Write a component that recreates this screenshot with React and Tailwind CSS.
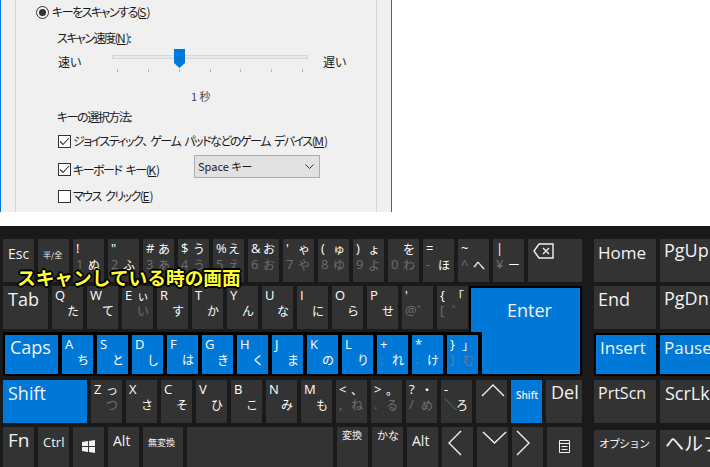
import React from "react";

const jp = "font-['Noto_Sans_CJK_JP','Noto_Sans',sans-serif]";

// [top left, top right, bottom left, bottom right] - a leading ~ means dim legend
const row1 = [
    ["!", "", "~1", "ぬ"], ['"', "", "~2", "ふ"], ["#", "あ", "~3", "~あ"], ["$", "う", "~4", "~う"],
    ["%", "え", "~5", "~え"], ["&", "お", "~6", "~お"], ["'", "ゃ", "~7", "~や"], ["(", "ゅ", "~8", "~ゆ"],
    [")", "ょ", "~9", "~よ"], ["", "を", "~0", "~わ"], ["=", "", "~-", "ほ"], ["~", "", "~^", "へ"], ["|", "", "~¥", "ー"],
];
const row2 = [
    ["Q", "", "", "た"], ["W", "", "", "て"], ["E", "ぃ", "", "~い"], ["R", "", "", "す"], ["T", "", "", "か"],
    ["Y", "", "", "ん"], ["U", "", "", "な"], ["I", "", "", "に"], ["O", "", "", "ら"], ["P", "", "", "せ"],
    ["'", "", "~@", "~゛"], ["{", "「", "~[", "~゜"],
];
const row3 = [
    ["A", "", "", "ち"], ["S", "", "", "と"], ["D", "", "", "し"], ["F", "", "", "は"], ["G", "", "", "き"],
    ["H", "", "", "く"], ["J", "", "", "ま"], ["K", "", "", "の"], ["L", "", "", "り"],
    ["+", "", "~;", "れ"], ["*", "", "~:", "け"], ["}", "」", "~]", "~む"],
];
const row4 = [
    ["Z", "っ", "", "~つ"], ["X", "", "", "さ"], ["C", "", "", "そ"], ["V", "", "", "ひ"], ["B", "", "", "こ"],
    ["N", "", "", "み"], ["M", "", "", "も"], ["<", "、", "~,", "~ね"], [">", "。", "~.", "~る"],
    ["?", "・", "~/", "~め"], ["-", "", "~＼", "ろ"],
];

const Legend = ({ text, blue, kana }) => {
    if (!text) return <span />;
    const dim = text[0] === "~" && text.length > 1;
    const color = dim ? (blue ? "text-[#5d7d9c]" : "text-[#6f6f6f]") : "text-white";
    return (
        <span className={`${color} ${kana ? `text-[12px] ${jp}` : "text-[13px]"} leading-none whitespace-nowrap self-center`}>
            {dim ? text.slice(1) : text}
        </span>
    );
};

const LetterKey = ({ item, blue, tall }) => (
    <div className={`w-[31px] h-full shrink-0 pl-[3px] grid grid-cols-[12px_auto] ${tall ? "grid-rows-[19px_13px]" : "grid-rows-[19px_11px]"} ${blue ? "bg-[#0078d7]" : "bg-[#333333]"}`}>
        <Legend text={item[0]} blue={blue} />
        <Legend text={item[1]} blue={blue} kana />
        <Legend text={item[2]} blue={blue} />
        <Legend text={item[3]} blue={blue} kana />
    </div>
);

const Key = ({ w, label, text = "text-[18px]", pad = "pl-[5px] pt-[3px]", blue, children }) => (
    <div className={`${w} h-full shrink-0 overflow-hidden whitespace-nowrap leading-tight text-[#f2f2f2] ${text} ${pad} ${blue ? "bg-[#0078d7]" : "bg-[#333333]"}`}>
        {label}
        {children}
    </div>
);

const Chevron = ({ points, w = 26, h = 26, className = "" }) => (
    <svg width={w} height={h} viewBox={`0 0 ${w} ${h}`} className={className} fill="none" stroke="#f2f2f2" strokeWidth="1.4">
        <polyline points={points} />
    </svg>
);

const Check = ({ checked }) => (
    <span className="w-[13px] h-[13px] border border-[#333333] bg-white shrink-0 flex items-center justify-center">
        {checked && (
            <svg width="11" height="11" viewBox="0 0 11 11" fill="none" stroke="#333333" strokeWidth="1.1">
                <polyline points="1,5.5 4,8.5 10,2" />
            </svg>
        )}
    </span>
);

const Hot = ({ children }) => <u className="tracking-normal">{children}</u>;

const Dialog = () => (
    <div className={`w-[392px] h-[212px] overflow-hidden border-x border-x-[#0078d7] bg-[#f0f0f0] text-[#1a1a1a] text-[12px] leading-none tracking-[-1.5px] [word-spacing:3px] [font-feature-settings:'palt'] ${jp}`}>
        <div className="ml-[14px] w-[362px] h-full border-x border-x-[#d6d6d6]">
            <div className="flex items-center gap-[3px] h-[24px] pl-[20px]">
                <span className="w-[13px] h-[13px] rounded-full border border-[#333333] flex items-center justify-center">
                    <span className="w-[7px] h-[7px] rounded-full bg-[#333333]" />
                </span>
                <span>キーをスキャンする(<Hot>S</Hot>)</span>
            </div>
            <div className="mt-[7px] pl-[41px] h-[14px] flex items-center">スキャン速度(<Hot>N</Hot>):</div>
            <div className="mt-[4px] pl-[42px] h-[24px] flex items-start">
                <span className="w-[54px] mt-[7px] tracking-normal">速い</span>
                <svg width="198" height="24" viewBox="0 0 198 24">
                    <rect x="0.5" y="6.5" width="195" height="3" fill="#e7eaea" stroke="#d6d6d6" />
                    {[5, 36, 67, 98, 128, 159, 190].map((x) => (
                        <rect key={x} x={x} y="20" width="1" height="3" fill="#b5b5b5" />
                    ))}
                    <polygon points="62,0 73,0 73,14 67.5,19 62,14" fill="#0078d7" />
                </svg>
                <span className="ml-[13px] mt-[7px] tracking-normal">遅い</span>
            </div>
            <div className="mt-[16px] pl-[175px] h-[14px] flex items-center text-[#444444] tracking-normal [word-spacing:0px] text-[11px]">1 秒</div>
            <div className="mt-[7px] pl-[41px] h-[14px] flex items-center">キーの選択方法:</div>
            <div className="mt-[10px] pl-[42px] h-[14px] flex items-center gap-[2px]">
                <Check checked />
                <span>ジョイスティック<span className="tracking-normal mr-[2px]">、</span>ゲーム パッドなどのゲーム デバイス(<Hot>M</Hot>)</span>
            </div>
            <div className="mt-[7px] pl-[42px] h-[23px] flex items-start">
                <span className="mt-[8px] flex items-center gap-[2px] w-[136px]">
                    <Check checked />
                    <span>キーボード キー(<Hot>K</Hot>)</span>
                </span>
                <div className="w-[126px] h-[23px] bg-[#e1e1e1] border border-[#adadad] flex items-center justify-between pl-[3px] pr-[5px] tracking-normal [word-spacing:0px] text-[11px]">
                    <span>Space キー</span>
                    <svg width="9" height="6" viewBox="0 0 9 6" fill="none" stroke="#333333">
                        <polyline points="0.5,0.5 4.5,4.5 8.5,0.5" />
                    </svg>
                </div>
            </div>
            <div className="mt-[11px] pl-[42px] h-[14px] flex items-center gap-[2px]">
                <Check />
                <span>マウス クリック(<Hot>E</Hot>)</span>
            </div>
        </div>
    </div>
);

const Keyboard = () => (
    <div className="relative h-[241px] bg-[#1a1a1a] pt-[13px] pl-[3px] flex font-['Open_Sans','Noto_Sans_CJK_JP',sans-serif]">
        <div className="w-[579px] shrink-0">
            {/* number row */}
            <div className="flex gap-[4px] h-[43px]">
                <Key w="w-[31px]" label="Esc" text="text-[14px]" pad="pl-[5px] pt-[6px]" />
                <Key w="w-[31px]" label="半/全" text={`text-[8px] text-[#aaaaaa] ${jp}`} pad="pl-[5px] pt-[11px]" />
                {row1.map((item, i) => <LetterKey key={i} item={item} tall />)}
                <Key w="w-[54px]" label="" pad="pl-[5px] pt-[4px]">
                    <svg width="21" height="16" viewBox="0 0 21 16" fill="none" stroke="#f2f2f2" strokeWidth="1.4">
                        <path d="M6 1 H20 V15 H6 L1 8 Z M10 5 L16 11 M16 5 L10 11" />
                    </svg>
                </Key>
            </div>

            {/* tab and caps rows share the big enter key */}
            <div className="flex mt-[4px] h-[90px]">
                <div className="w-[464px] shrink-0">
                    <div className="flex gap-[4px] h-[43px]">
                        <Key w="w-[45px]" label="Tab" pad="pl-[5px] pt-[2px]" />
                        {row2.map((item, i) => <LetterKey key={i} item={item} />)}
                    </div>
                    <div className="relative z-10 mt-[3px] w-[479px] h-[44px] bg-black pt-[3px] pb-[2px] pl-[2px] pr-[4px] flex gap-[4px]">
                        <Key w="w-[53px]" label="Caps" blue pad="pl-[5px] pt-[1px]" />
                        {row3.map((item, i) => <LetterKey key={i} item={item} blue />)}
                    </div>
                </div>
                <div className="ml-[2px] w-[113px] h-[90px] bg-black p-[2px]">
                    <Key w="w-[109px]" label="Enter" blue pad="pl-[36px] pt-[11px]" />
                </div>
            </div>

            <div className="flex gap-[4px] h-[43px] mt-[4px]">
                <Key w="w-[84px]" label="Shift" blue pad="pl-[5px] pt-[2px]" />
                {row4.map((item, i) => <LetterKey key={i} item={item} />)}
                <Key w="w-[31px]" pad="pl-[5px] pt-[3px]">
                    <Chevron w={24} h={14} points="1,13 12,2 23,13" />
                </Key>
                <Key w="w-[31px]" label="Shift" blue text="text-[10px] font-semibold" pad="pl-[5px] pt-[9px]" />
                <Key w="w-[36px]" label="Del" pad="pl-[5px] pt-[1px]" />
            </div>

            <div className="flex gap-[4px] h-[43px] mt-[4px]">
                <Key w="w-[31px]" label="Fn" text="text-[19px]" pad="pl-[5px] pt-[2px]" />
                <Key w="w-[31px]" label="Ctrl" text="text-[13px]" pad="pl-[5px] pt-[7px]" />
                <Key w="w-[31px]" pad="pl-[9px] pt-[13px]">
                    <svg width="13" height="13" viewBox="0 0 13 13" fill="#f2f2f2">
                        <path d="M0 2 L6 1 V6 H0 Z M7 1 L13 0 V6 H7 Z M0 7 H6 V12 L0 11 Z M7 7 H13 V13 L7 12 Z" />
                    </svg>
                </Key>
                <Key w="w-[31px]" label="Alt" text="text-[14px]" pad="pl-[5px] pt-[5px]" />
                <Key w="w-[40px]" label="無変換" text={`text-[9px] text-[#bbbbbb] ${jp}`} pad="pl-[5px] pt-[10px]" />
                <Key w="w-[146px]" label="" />
                <Key w="w-[31px]" label="変換" text={`text-[10px] text-[#bbbbbb] ${jp}`} pad="pl-[5px] pt-[2px]" />
                <Key w="w-[31px]" label="かな" text={`text-[11px] ${jp}`} pad="pl-[5px] pt-[2px]" />
                <Key w="w-[31px]" label="Alt" text="text-[14px]" pad="pl-[5px] pt-[5px]" />
                <Key w="w-[31px]" pad="pl-[5px] pt-[3px]">
                    <Chevron w={15} h={26} points="14,1 2,13 14,25" />
                </Key>
                <Key w="w-[31px]" pad="pl-[5px] pt-[4px]">
                    <Chevron w={25} h={13} points="1,1 12.5,12 24,1" />
                </Key>
                <Key w="w-[31px]" pad="pl-[4px] pt-[3px]">
                    <Chevron w={15} h={26} points="1,1 13,13 1,25" />
                </Key>
                <Key w="w-[35px]" pad="pl-[12px] pt-[13px]">
                    <svg width="11" height="13" viewBox="0 0 11 13" fill="none" stroke="#f2f2f2">
                        <path d="M0.5 0.5 H10.5 V12.5 H0.5 Z M0.5 3.5 H10.5 M2.5 6.5 H8.5 M2.5 9.5 H8.5" />
                    </svg>
                </Key>
            </div>
        </div>

        {/* navigation block, runs past the window edge */}
        <div className="ml-[12px] w-[128px] shrink-0">
            <div className="flex gap-[4px] h-[43px]">
                <Key w="w-[62px]" label="Home" text="text-[17px]" pad="pl-[4px] pt-[3px]" />
                <Key w="w-[62px]" label="PgUp" text="text-[18px]" pad="pl-[4px] pt-[0px]" />
            </div>
            <div className="flex gap-[4px] h-[43px] mt-[4px]">
                <Key w="w-[62px]" label="End" text="text-[18px]" pad="pl-[4px] pt-[2px]" />
                <Key w="w-[62px]" label="PgDn" text="text-[18px]" pad="pl-[4px] pt-[1px]" />
            </div>
            <div className="flex gap-[4px] h-[43px] mt-[4px] bg-black py-[2px] pl-[2px]">
                <Key w="w-[60px]" label="Insert" text="text-[17px]" blue pad="pl-[4px] pt-[2px]" />
                <Key w="w-[62px]" label="Pause" text="text-[17px]" blue pad="pl-[4px] pt-[2px]" />
            </div>
            <div className="flex gap-[4px] h-[43px] mt-[4px]">
                <Key w="w-[62px]" label="PrtScn" text="text-[16px]" pad="pl-[4px] pt-[3px]" />
                <Key w="w-[62px]" label="ScrLk" text="text-[18px]" pad="pl-[5px] pt-[2px]" />
            </div>
            <div className="flex gap-[4px] h-[43px] mt-[7px]">
                <Key w="w-[62px]" label="オプション" text={`text-[11px] tracking-[-1px] ${jp}`} pad="pl-[5px] pt-[7px]" />
                <Key w="w-[62px]" label="ヘルプ" text={`text-[19px] ${jp}`} pad="pl-[5px] pt-[1px]" />
            </div>
        </div>

        {/* caption burnt onto the screenshot */}
        <div className={`absolute z-20 left-[17px] top-[42px] text-[18.7px] font-bold leading-none whitespace-nowrap text-[#ffff33] [text-shadow:1px_1px_0_#000,-1px_-1px_0_#000,1px_-1px_0_#000,-1px_1px_0_#000,2px_0_0_#000,-2px_0_0_#000,0_2px_0_#000,0_-2px_0_#000] ${jp}`}>
            スキャンしている時の画面
        </div>
    </div>
);

export default function App() {
    return (
        <div className="w-[710px] h-[467px] overflow-hidden bg-white">
            <Dialog />
            <div className="h-[14px]" />
            <Keyboard />
        </div>
    );
}
